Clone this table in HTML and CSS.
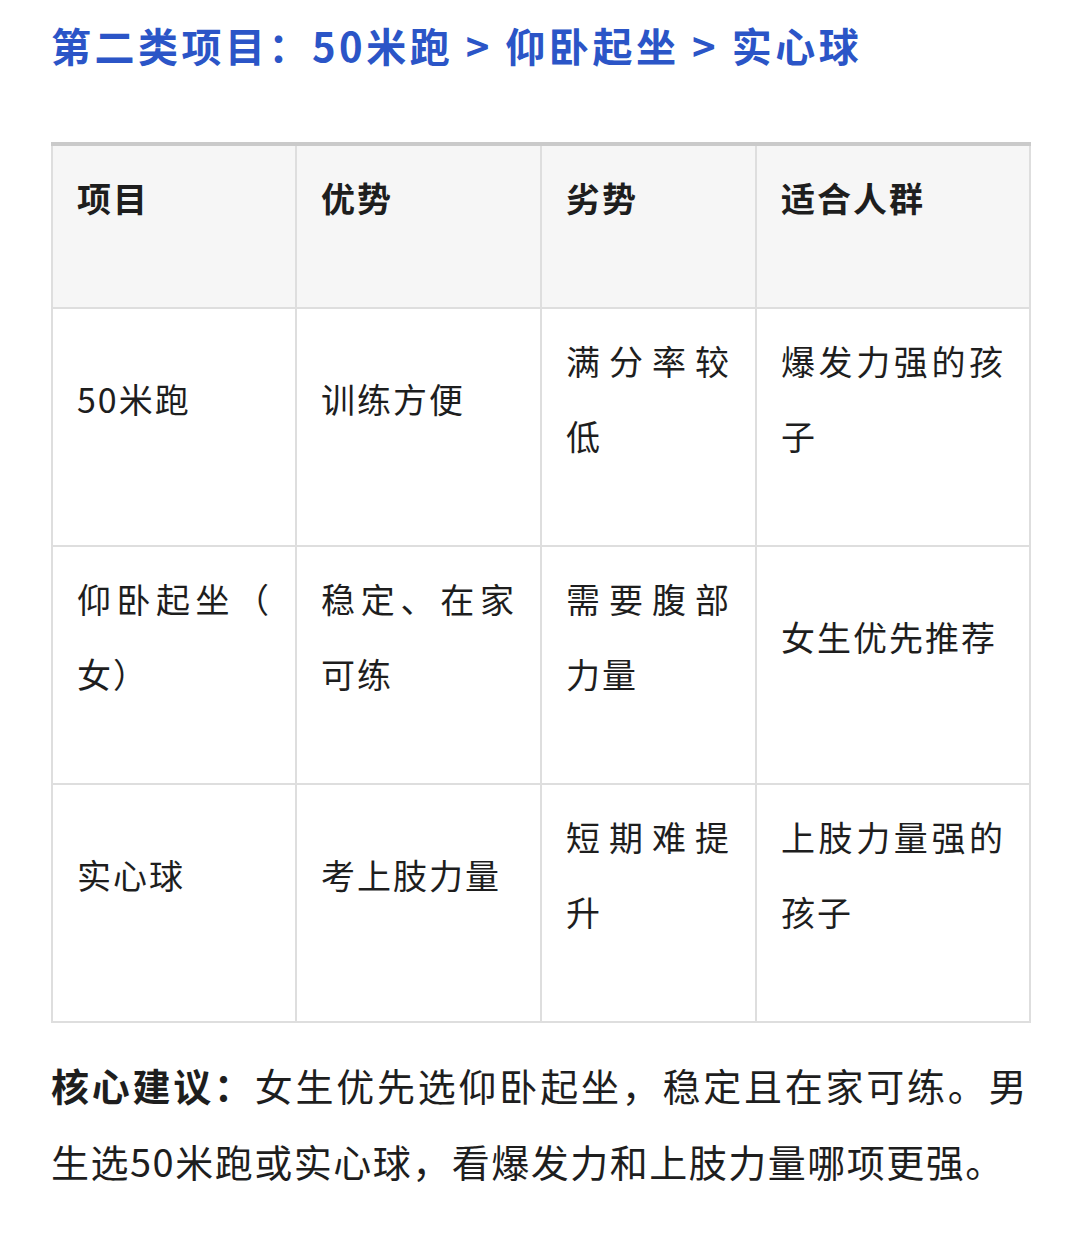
FILE: index.html
```html
<!DOCTYPE html>
<html lang="zh-CN">
<head>
<meta charset="utf-8">
<link rel="stylesheet" href="styles.css">
</head>
<body>
<div class="page">
  <h2 class="title">第二类项目：50米跑 &gt; 仰卧起坐 &gt; 实心球</h2>
  <table class="grid">
    <colgroup>
      <col class="c1"><col class="c2"><col class="c3"><col class="c4">
    </colgroup>
    <thead>
      <tr><th>项目</th><th>优势</th><th>劣势</th><th>适合人群</th></tr>
    </thead>
    <tbody>
      <tr><td>50米跑</td><td>训练方便</td><td>满分率较低</td><td>爆发力强的孩子</td></tr>
      <tr><td>仰卧起坐（女）</td><td>稳定、在家可练</td><td>需要腹部力量</td><td>女生优先推荐</td></tr>
      <tr><td>实心球</td><td>考上肢力量</td><td>短期难提升</td><td>上肢力量强的孩子</td></tr>
    </tbody>
  </table>
  <p class="advice"><strong>核心建议：</strong>女生优先选仰卧起坐，稳定且在家可练。男生选50米跑或实心球，看爆发力和上肢力量哪项更强。</p>
</div>
</body>
</html>
```
FILE: styles.css
```css
html, body {
  margin: 0;
  padding: 0;
  background: #fff;
}
body {
  font-family: "Noto Sans CJK SC", "Noto Sans", sans-serif;
  color: #1e1e1e;
}
.page {
  padding: 18px 52px 0 51px;
}
.title {
  margin: 0;
  font-size: 40px;
  line-height: 54px;
  font-weight: 700;
  color: #2b55c7;
  letter-spacing: 3.5px;
  white-space: nowrap;
}
.grid {
  margin-top: 70px;
  width: 978px;
  border-collapse: collapse;
  table-layout: fixed;
  border-top: 4px solid #cacaca;
}
.c1 { width: 244px; }
.c2 { width: 245px; }
.c3 { width: 215px; }
.c4 { width: 274px; }
.grid th, .grid td {
  border: 2px solid #dedede;
  padding: 14px 24px 72px 24px;
  font-size: 34px;
  line-height: 75px;
  letter-spacing: 2px;
  text-align: justify;
  vertical-align: middle;
  line-break: anywhere;
}
.grid th {
  background: #f6f6f6;
  font-weight: 700;
  border-top: none;
}
.advice {
  margin: 24px 0 0 0;
  font-size: 38px;
  line-height: 76px;
  letter-spacing: 1.5px;
  text-align: justify;
}
.advice strong {
  font-weight: 700;
}
```
